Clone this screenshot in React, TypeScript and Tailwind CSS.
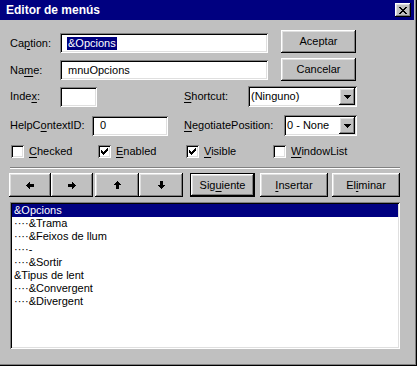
import React from 'react'

const raised =
  'shadow-[inset_-1px_-1px_#000000,inset_1px_1px_#ffffff,inset_-2px_-2px_#808080,inset_2px_2px_#dfdfdf]'
const sunken =
  'shadow-[inset_1px_1px_#808080,inset_-1px_-1px_#ffffff,inset_2px_2px_#000000,inset_-2px_-2px_#dfdfdf]'
const defaultBtn =
  'shadow-[inset_0_0_0_1px_#000000,inset_-2px_-2px_#000000,inset_2px_2px_#ffffff,inset_-3px_-3px_#808080,inset_3px_3px_#dfdfdf]'

// pixel glyph: each 'X' is one pixel
function Pix({ rows, color = '#000' }: { rows: string[]; color?: string }) {
  const w = rows[0].length
  const h = rows.length
  let d = ''
  rows.forEach((r, y) => {
    for (let x = 0; x < r.length; x++) if (r[x] === 'X') d += `M${x} ${y}h1v1h-1z`
  })
  return (
    <svg width={w} height={h} viewBox={`0 0 ${w} ${h}`} shapeRendering="crispEdges">
      <path d={d} fill={color} />
    </svg>
  )
}

const closeX = ['XX....XX', '.XX..XX.', '..XXXX..', '...XX...', '..XXXX..', '.XX..XX.', 'XX....XX']
const tri = ['XXXXXXX', '.XXXXX.', '..XXX..', '...X...']
const check = ['......X', '.....XX', 'X...XXX', 'XX.XXX.', 'XXXXX..', '.XXX...', '..X....']
const left = ['...X....', '..XX....', '.XXXXXXX', 'XXXXXXXX', '.XXXXXXX', '..XX....', '...X....']
const right = ['....X...', '....XX..', 'XXXXXXX.', 'XXXXXXXX', 'XXXXXXX.', '....XX..', '....X...']
const up = ['...X...', '..XXX..', '.XXXXX.', 'XXXXXXX', '..XXX..', '..XXX..', '..XXX..', '..XXX..']
const down = ['..XXX..', '..XXX..', '..XXX..', '..XXX..', 'XXXXXXX', '.XXXXX.', '..XXX..', '...X...']

function Label({ pre, u, post, w }: { pre: string; u: string; post: string; w: string }) {
  return (
    <span className={`${w} shrink-0 whitespace-nowrap`}>
      {pre}
      <u className="underline-offset-[2px]">{u}</u>
      {post}
    </span>
  )
}

function TextBox({ w, value, selected }: { w: string; value?: string; selected?: boolean }) {
  return (
    <div className={`${w} h-[20px] shrink-0 bg-white ${sunken} flex items-center pl-[7px]`}>
      {value && (
        <span className={selected ? 'bg-[#000080] text-white leading-[13px] px-[1px]' : 'leading-[13px] px-[1px]'}>
          {value}
        </span>
      )}
    </div>
  )
}

function Select({ w, value }: { w: string; value: string }) {
  return (
    <div className={`${w} h-[21px] shrink-0 bg-white ${sunken} flex items-center justify-between pl-[3px] pr-[2px]`}>
      <span>{value}</span>
      <div className={`w-[16px] h-[17px] bg-[#c0c0c0] ${raised} flex items-center justify-center`}>
        <Pix rows={tri} />
      </div>
    </div>
  )
}

function Button({ w, children }: { w: string; children: React.ReactNode }) {
  return (
    <div className={`${w} h-[23px] shrink-0 bg-[#c0c0c0] ${raised} flex items-center justify-center`}>
      {children}
    </div>
  )
}

function CheckBox({ checked, u, post, w }: { checked: boolean; u: string; post: string; w: string }) {
  return (
    <div className={`${w} flex items-center gap-[5px]`}>
      <div className={`w-[13px] h-[13px] bg-white ${sunken} flex items-center justify-center`}>
        {checked && <Pix rows={check} />}
      </div>
      <span>
        <u className="underline-offset-[2px]">{u}</u>
        {post}
      </span>
    </div>
  )
}

const items = [
  '&Opcions',
  '····&Trama',
  '····&Feixos de llum',
  '····-',
  '····&Sortir',
  '&Tipus de lent',
  '····&Convergent',
  '····&Divergent',
]

export default function App() {
  return (
    <div className="w-[417px] h-[366px] bg-[#c0c0c0] text-black text-[11px] font-['Liberation_Sans',Arial,sans-serif] shadow-[inset_-1px_-1px_#000000,inset_-2px_-2px_#808080] pr-[3px] flex flex-col">
      {/* title bar */}
      <div className="h-[20px] bg-[#000080] flex items-center justify-between pl-[6px] pr-[3px]">
        <span className="text-white font-bold text-[12px]">Editor de menús</span>
        <div className={`w-[16px] h-[14px] bg-[#c0c0c0] ${raised} flex items-center justify-center`}>
          <Pix rows={closeX} />
        </div>
      </div>

      <div className="pl-[10px] flex flex-col">
        <div className="mt-[10px] h-[23px] flex items-start">
          <div className="mt-[3px] h-[20px] flex items-center">
            <Label w="w-[50px]" pre="Ca" u="p" post="tion:" />
            <TextBox w="w-[208px]" value="&Opcions" selected />
          </div>
          <div className="ml-[13px]">
            <Button w="w-[75px]">Aceptar</Button>
          </div>
        </div>

        <div className="mt-[5px] h-[23px] flex items-start">
          <div className="mt-[2px] h-[20px] flex items-center">
            <Label w="w-[50px]" pre="Na" u="m" post="e:" />
            <TextBox w="w-[208px]" value="mnuOpcions" />
          </div>
          <div className="ml-[13px]">
            <Button w="w-[75px]">Cancelar</Button>
          </div>
        </div>

        <div className="mt-[5px] h-[21px] flex items-center">
          <Label w="w-[50px]" pre="Inde" u="x" post=":" />
          <TextBox w="w-[37px]" />
          <div className="ml-[87px] flex items-center">
            <Label w="w-[64px]" pre="" u="S" post="hortcut:" />
            <Select w="w-[109px]" value="(Ninguno)" />
          </div>
        </div>

        <div className="mt-[8px] h-[21px] flex items-center">
          <Label w="w-[82px]" pre="HelpC" u="o" post="ntextID:" />
          <TextBox w="w-[76px]" value="0" />
          <div className="ml-[16px] flex items-center">
            <Label w="w-[100px]" pre="" u="N" post="egotiatePosition:" />
            <Select w="w-[73px]" value="0 - None" />
          </div>
        </div>

        <div className="mt-[9px] h-[13px] flex items-center pl-[1px]">
          <CheckBox w="w-[87px]" checked={false} u="C" post="hecked" />
          <CheckBox w="w-[88px]" checked u="E" post="nabled" />
          <CheckBox w="w-[87px]" checked u="V" post="isible" />
          <CheckBox w="w-[100px]" checked={false} u="W" post="indowList" />
        </div>

        <div className="mt-[9px] w-[390px] h-[2px] border-t border-t-[#808080] border-b border-b-white" />

        <div className="mt-[4px] h-[24px] flex items-stretch -ml-[1px]">
          <div className={`w-[42px] bg-[#c0c0c0] ${raised} flex items-center justify-center`}>
            <Pix rows={left} />
          </div>
          <div className={`w-[42px] bg-[#c0c0c0] ${raised} flex items-center justify-center`}>
            <Pix rows={right} />
          </div>
          <div className={`ml-[2px] w-[44px] bg-[#c0c0c0] ${raised} flex items-center justify-center`}>
            <Pix rows={up} />
          </div>
          <div className={`w-[44px] bg-[#c0c0c0] ${raised} flex items-center justify-center`}>
            <Pix rows={down} />
          </div>
          <div className={`ml-[7px] w-[65px] bg-[#c0c0c0] ${defaultBtn} flex items-center justify-center`}>
            <span>
              Sig<u className="underline-offset-[2px]">u</u>iente
            </span>
          </div>
          <div className={`ml-[5px] w-[68px] bg-[#c0c0c0] ${raised} flex items-center justify-center`}>
            <span>
              <u className="underline-offset-[2px]">I</u>nsertar
            </span>
          </div>
          <div className={`ml-[4px] w-[68px] bg-[#c0c0c0] ${raised} flex items-center justify-center`}>
            <span>
              El<u className="underline-offset-[2px]">i</u>minar
            </span>
          </div>
        </div>

        <div className={`mt-[5px] w-[390px] h-[147px] bg-white ${sunken} p-[2px] flex flex-col`}>
          {items.map((t, i) => (
            <div
              key={t}
              className={`h-[13px] leading-[13px] pl-[2px] whitespace-nowrap ${i === 0 ? 'bg-[#000080] text-white' : ''}`}
            >
              {t}
            </div>
          ))}
        </div>
      </div>
    </div>
  )
}
